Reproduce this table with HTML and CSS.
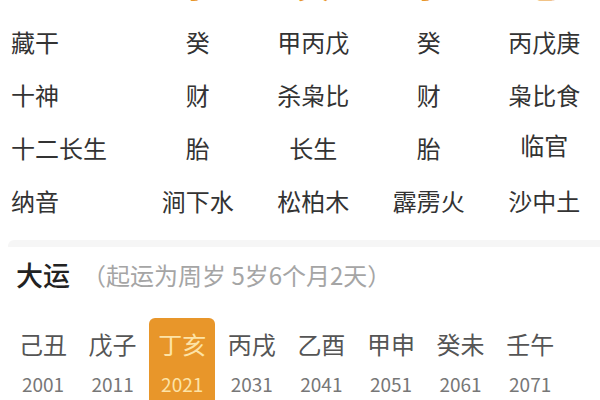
FILE: index.html
```html
<!DOCTYPE html>
<html lang="zh">
<head>
<meta charset="utf-8">
<link rel="stylesheet" href="styles.css">
</head>
<body>
<section class="chart">
  <div class="row row-top">
    <div class="label">地支</div>
    <div class="cell branch">子</div>
    <div class="cell branch">寅</div>
    <div class="cell branch">子</div>
    <div class="cell branch">巳</div>
  </div>
  <div class="row">
    <div class="label">藏干</div>
    <div class="cell">癸</div>
    <div class="cell">甲丙戊</div>
    <div class="cell">癸</div>
    <div class="cell">丙戊庚</div>
  </div>
  <div class="row">
    <div class="label">十神</div>
    <div class="cell">财</div>
    <div class="cell">杀枭比</div>
    <div class="cell">财</div>
    <div class="cell">枭比食</div>
  </div>
  <div class="row">
    <div class="label">十二长生</div>
    <div class="cell">胎</div>
    <div class="cell">长生</div>
    <div class="cell">胎</div>
    <div class="cell up">临官</div>
  </div>
  <div class="row">
    <div class="label">纳音</div>
    <div class="cell">涧下水</div>
    <div class="cell">松柏木</div>
    <div class="cell">霹雳火</div>
    <div class="cell">沙中土</div>
  </div>
</section>
<div class="gap"></div>
<section class="dayun">
  <div class="dayun-head">
    <span class="title">大运</span>
    <span class="note">（起运为周岁 5岁6个月2天）</span>
  </div>
  <div class="dayun-list">
    <div class="yun"><span class="gz">己丑</span><span class="yr">2001</span></div>
    <div class="yun"><span class="gz">戊子</span><span class="yr">2011</span></div>
    <div class="yun active"><span class="gz">丁亥</span><span class="yr">2021</span></div>
    <div class="yun"><span class="gz">丙戌</span><span class="yr">2031</span></div>
    <div class="yun"><span class="gz">乙酉</span><span class="yr">2041</span></div>
    <div class="yun"><span class="gz">甲申</span><span class="yr">2051</span></div>
    <div class="yun"><span class="gz">癸未</span><span class="yr">2061</span></div>
    <div class="yun"><span class="gz">壬午</span><span class="yr">2071</span></div>
  </div>
</section>
</body>
</html>
```

FILE: styles.css
```css
html, body {
  margin: 0;
  padding: 0;
  background: #fff;
  width: 600px;
  height: 400px;
  overflow: hidden;
  font-family: "Noto Sans CJK SC", "Noto Sans", sans-serif;
}

.chart {
  margin-top: -38px;
  padding-bottom: 13px;
}

.row {
  display: grid;
  grid-template-columns: 140px repeat(4, 115.5px);
  height: 53px;
  align-items: center;
  font-size: 24px;
  color: #333;
}

.label {
  padding-left: 11px;
  white-space: nowrap;
}

.cell {
  text-align: center;
  white-space: nowrap;
}

.cell.up {
  margin-top: -6px;
}

.row-top .label {
  margin-top: -6px;
}

.branch {
  color: #e8962a;
  font-size: 32px;
  margin-top: -10px;
}

.gap {
  height: 7px;
  background: #f6f6f6;
  margin-left: 8px;
  border-top-left-radius: 6px;
}

.dayun-head {
  height: 50px;
  display: flex;
  align-items: center;
  padding-left: 16px;
  margin-top: 2px;
}

.title {
  font-size: 27px;
  color: #222;
  font-weight: 500;
}

.note {
  font-size: 24px;
  color: #a5a5a5;
  margin-left: 12px;
}

.dayun-list {
  display: grid;
  grid-template-columns: repeat(8, 66px);
  column-gap: 3.6px;
  padding-left: 10px;
  margin-top: 19px;
}

.yun {
  display: flex;
  flex-direction: column;
  align-items: center;
  height: 100px;
  border-radius: 6px 6px 0 0;
}

.gz {
  font-size: 24px;
  color: #555;
  margin-top: 9px;
  line-height: 34px;
}

.yr {
  font-size: 19px;
  color: #777;
  margin-top: 10px;
  line-height: 26px;
}

.yun.active {
  background: #e8962a;
}

.yun.active .gz,
.yun.active .yr {
  color: #fde3a6;
}
```
